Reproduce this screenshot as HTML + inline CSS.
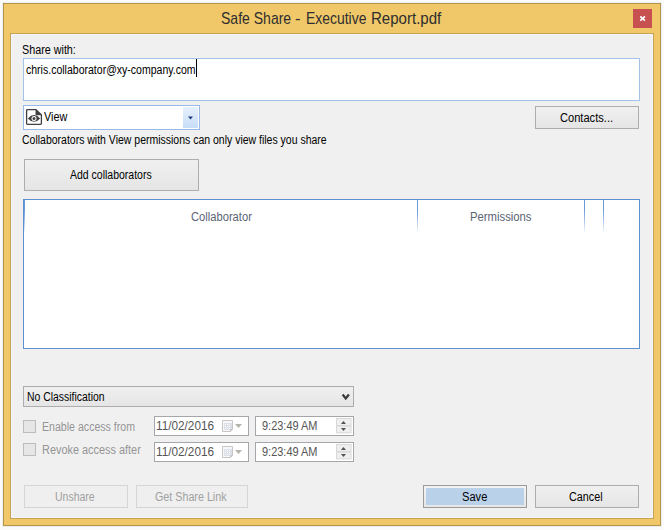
<!DOCTYPE html>
<html><head><meta charset="utf-8">
<style>
*{margin:0;padding:0;box-sizing:border-box}
html,body{width:664px;height:530px;overflow:hidden;background:#fbfbfb;font-family:"Liberation Sans",sans-serif}
.a{position:absolute}
.t{position:absolute;font-size:11px;line-height:13px;white-space:nowrap;letter-spacing:-0.25px;color:#000}
#win{left:3px;top:3px;width:658px;height:523px;border:1px solid #b39548;background:#f0c86a;box-shadow:0 0 0 1px #eceef3}
#content{left:10px;top:33px;width:644px;height:486px;border:1px solid #c5a453;background:#f0f0f0;box-shadow:inset 0 0 0 1px #f4f5fa}
#close{left:633px;top:9px;width:19px;height:19px;background:#c75050}
.ti{top:9px;font-size:15.75px;line-height:20px;color:#2e2e2e;white-space:nowrap;transform-origin:0 0}
.tb{border:1px solid #a4c2e8;background:#fff}
.btn{border:1px solid #adadad;background:linear-gradient(#f0f0f0,#e5e5e5)}
.dbtn{border:1px solid #d5d5d5;background:#efefef}
.gbox{border:1px solid #a5a5aa;background:#fff}
.sep{width:1px;top:200px;height:34px;background:linear-gradient(#6b9ad6 30%,rgba(107,154,214,0))}
.dis{color:#8c8c8c}
.m{position:absolute;font-size:12px;line-height:13px;white-space:nowrap;transform-origin:0 0;color:#000}
</style></head><body>
<div id="win" class="a"></div>
<div id="content" class="a"></div>
<div class="a ti" style="left:220.8px;transform:scaleX(0.89)">Safe Share</div><div class="a ti" style="left:294.9px;transform:scaleX(1.05)">-</div><div class="a ti" style="left:305.8px;transform:scaleX(0.885)">Executive</div><div class="a ti" style="left:371.4px;transform:scaleX(0.955)">Report.pdf</div>
<div id="close" class="a"><svg width="19" height="19" style="position:absolute;left:0;top:0"><path d="M7.3 7.3 L11.9 11.7 M11.9 7.3 L7.3 11.7" stroke="#fff" stroke-width="1.7"/></svg></div>

<div class="a tb" style="left:23px;top:58px;width:617px;height:43px"></div>
<div class="a" style="left:196px;top:59px;width:1px;height:18px;background:#000"></div>

<div class="a" style="left:23px;top:105px;width:177px;height:25px;border:1px solid #97bbe6;background:#fff"></div>
<div class="a" style="left:183px;top:107px;width:15px;height:21px;background:linear-gradient(#e6f0fc,#c6ddf7)"></div>
<svg class="a" style="left:186px;top:115px" width="9" height="6"><path d="M2 1.5 L7 1.5 L4.5 4.5 Z" fill="#1e3a78"/></svg>
<svg class="a" style="left:24px;top:107px" width="22" height="21" viewBox="0 0 22 21">
<path d="M2.6 3.4 Q2.6 2.6 3.4 2.6 H11.9 L17.4 8 V16.6 Q17.4 17.4 16.6 17.4 H3.4 Q2.6 17.4 2.6 16.6 Z" fill="#fff" stroke="#404040" stroke-width="1.3" stroke-linejoin="round"/>
<path d="M11.9 2.6 V7.9 H17.4 Z" fill="#404040" stroke="#404040" stroke-width="0.6" stroke-linejoin="round"/>
<path d="M3.8 11.4 Q10 4.6 16.2 11.4 Q10 18.2 3.8 11.4 Z" fill="#404040"/>
<circle cx="10" cy="11.4" r="2.5" fill="#fff"/><circle cx="10" cy="11.4" r="1.5" fill="#404040"/>
</svg>

<div class="a btn" style="left:535px;top:106px;width:104px;height:23px"></div>


<div class="a btn" style="left:24px;top:159px;width:175px;height:32px"></div>

<div class="a" style="left:23px;top:199px;width:617px;height:150px;border:1px solid #5e90d2;background:#fff"></div>
<div class="a sep" style="left:24px"></div>
<div class="a sep" style="left:417px"></div>
<div class="a sep" style="left:584px"></div>
<div class="a sep" style="left:603px"></div>

<div class="a btn" style="left:23px;top:386px;width:331px;height:21px"></div>
<svg class="a" style="left:340px;top:392px" width="12" height="10"><path d="M2.6 2.6 L5.75 6.4 L8.9 2.6" fill="none" stroke="#3c3c3c" stroke-width="2.3"/></svg>

<div class="a" style="left:23px;top:420px;width:13px;height:13px;border:1px solid #bcbcbc;background:#e6e6e6"></div>
<div class="a" style="left:23px;top:443px;width:13px;height:13px;border:1px solid #bcbcbc;background:#e6e6e6"></div>

<div class="a gbox" style="left:154px;top:416px;width:95px;height:20px"></div>
<div class="a gbox" style="left:154px;top:442px;width:95px;height:20px"></div>

<div class="a gbox" style="left:255px;top:416px;width:99px;height:20px"></div>
<div class="a gbox" style="left:255px;top:442px;width:99px;height:20px"></div>

<div class="a dbtn" style="left:24px;top:485px;width:104px;height:23px"></div>
<div class="a dbtn" style="left:136px;top:485px;width:112px;height:23px"></div>

<div class="a" style="left:423px;top:485px;width:104px;height:23px;border:1px solid #9a9a9a;background:linear-gradient(#f3f3f3,#e6e6e6)"></div>
<div class="a" style="left:426px;top:488px;width:98px;height:17px;background:#bad1ea"></div>
<div class="a btn" style="left:535px;top:485px;width:104px;height:23px"></div>
<div class="m" style="left:22.4px;top:44px;transform:scaleX(0.897);color:#000">Share with:</div>
<div class="m" style="left:25.5px;top:64px;transform:scaleX(0.877);color:#000">chris.collaborator@xy-company.com</div>
<div class="m" style="left:44.2px;top:111px;transform:scaleX(0.904);color:#000">View</div>
<div class="m" style="left:559.5px;top:112px;transform:scaleX(0.925);color:#000">Contacts...</div>
<div class="m" style="left:21.8px;top:134px;transform:scaleX(0.874);color:#000">Collaborators with View permissions can only view files you share</div>
<div class="m" style="left:70.2px;top:169px;transform:scaleX(0.874);color:#000">Add collaborators</div>
<div class="m" style="left:190.5px;top:211px;transform:scaleX(0.931);color:#5a6474">Collaborator</div>
<div class="m" style="left:469.9px;top:211px;transform:scaleX(0.941);color:#5a6474">Permissions</div>
<div class="m" style="left:26.8px;top:391px;transform:scaleX(0.868);color:#000">No Classification</div>
<div class="m" style="left:41.5px;top:421px;transform:scaleX(0.883);color:#959595">Enable access from</div>
<div class="m" style="left:41.5px;top:444px;transform:scaleX(0.909);color:#959595">Revoke access after</div>
<div class="m" style="left:54.7px;top:491px;transform:scaleX(0.873);color:#a0a0a0">Unshare</div>
<div class="m" style="left:154.7px;top:491px;transform:scaleX(0.894);color:#a0a0a0">Get Share Link</div>
<div class="m" style="left:461.8px;top:491px;transform:scaleX(0.927);color:#000">Save</div>
<div class="m" style="left:568.5px;top:491px;transform:scaleX(0.9);color:#000">Cancel</div>
<div class="m" style="left:156px;top:420px;transform:scaleX(0.981);color:#555">11/02/2016</div>
<div class="m" style="left:262.2px;top:420px;transform:scaleX(0.914);color:#555">9:23:49 AM</div>
<div class="m" style="left:156px;top:446px;transform:scaleX(0.981);color:#555">11/02/2016</div>
<div class="m" style="left:262.2px;top:446px;transform:scaleX(0.914);color:#555">9:23:49 AM</div>
<svg class="a" style="left:219px;top:417px" width="26" height="18" viewBox="0 0 26 18">
<path d="M3.5 3.5 H13.5 V12.5 L11.5 14.5 H3.5 Z" fill="#f6f7fb" stroke="#cbc5c5" stroke-width="1"/>
<rect x="5" y="6" width="8" height="7" fill="#dde0e7"/>
<g fill="#fafbfd"><rect x="6" y="7" width="1" height="1"/><rect x="8" y="7" width="1" height="1"/><rect x="10" y="7" width="1" height="1"/><rect x="6" y="9" width="1" height="1"/><rect x="8" y="9" width="1" height="1"/><rect x="10" y="9" width="1" height="1"/><rect x="6" y="11" width="1" height="1"/><rect x="8" y="11" width="1" height="1"/><rect x="10" y="11" width="1" height="1"/></g>
<path d="M11.5 14.5 V12.5 H13.5" fill="none" stroke="#cbc5c5" stroke-width="1"/>
<path d="M16 7 H23 L19.5 11 Z" fill="#b4b4ac"/>
</svg>
<svg class="a" style="left:219px;top:443px" width="26" height="18" viewBox="0 0 26 18">
<path d="M3.5 3.5 H13.5 V12.5 L11.5 14.5 H3.5 Z" fill="#f6f7fb" stroke="#cbc5c5" stroke-width="1"/>
<rect x="5" y="6" width="8" height="7" fill="#dde0e7"/>
<g fill="#fafbfd"><rect x="6" y="7" width="1" height="1"/><rect x="8" y="7" width="1" height="1"/><rect x="10" y="7" width="1" height="1"/><rect x="6" y="9" width="1" height="1"/><rect x="8" y="9" width="1" height="1"/><rect x="10" y="9" width="1" height="1"/><rect x="6" y="11" width="1" height="1"/><rect x="8" y="11" width="1" height="1"/><rect x="10" y="11" width="1" height="1"/></g>
<path d="M11.5 14.5 V12.5 H13.5" fill="none" stroke="#cbc5c5" stroke-width="1"/>
<path d="M16 7 H23 L19.5 11 Z" fill="#b4b4ac"/>
</svg>
<svg class="a" style="left:335px;top:416px" width="18" height="18" viewBox="0 0 18 18">
<rect x="1.5" y="2.5" width="14.5" height="14.3" fill="#efefef" stroke="#d8d8d8" stroke-width="1"/>
<rect x="2" y="9" width="13.5" height="1.5" fill="#d8d8d8"/>
<path d="M5.9 7.9 H11 L8.45 4.9 Z" fill="#555"/>
<path d="M5.9 12.1 H11 L8.45 14.9 Z" fill="#555"/>
</svg>
<svg class="a" style="left:335px;top:442px" width="18" height="18" viewBox="0 0 18 18">
<rect x="1.5" y="2.5" width="14.5" height="14.3" fill="#efefef" stroke="#d8d8d8" stroke-width="1"/>
<rect x="2" y="9" width="13.5" height="1.5" fill="#d8d8d8"/>
<path d="M5.9 7.9 H11 L8.45 4.9 Z" fill="#555"/>
<path d="M5.9 12.1 H11 L8.45 14.9 Z" fill="#555"/>
</svg>
</body></html>
